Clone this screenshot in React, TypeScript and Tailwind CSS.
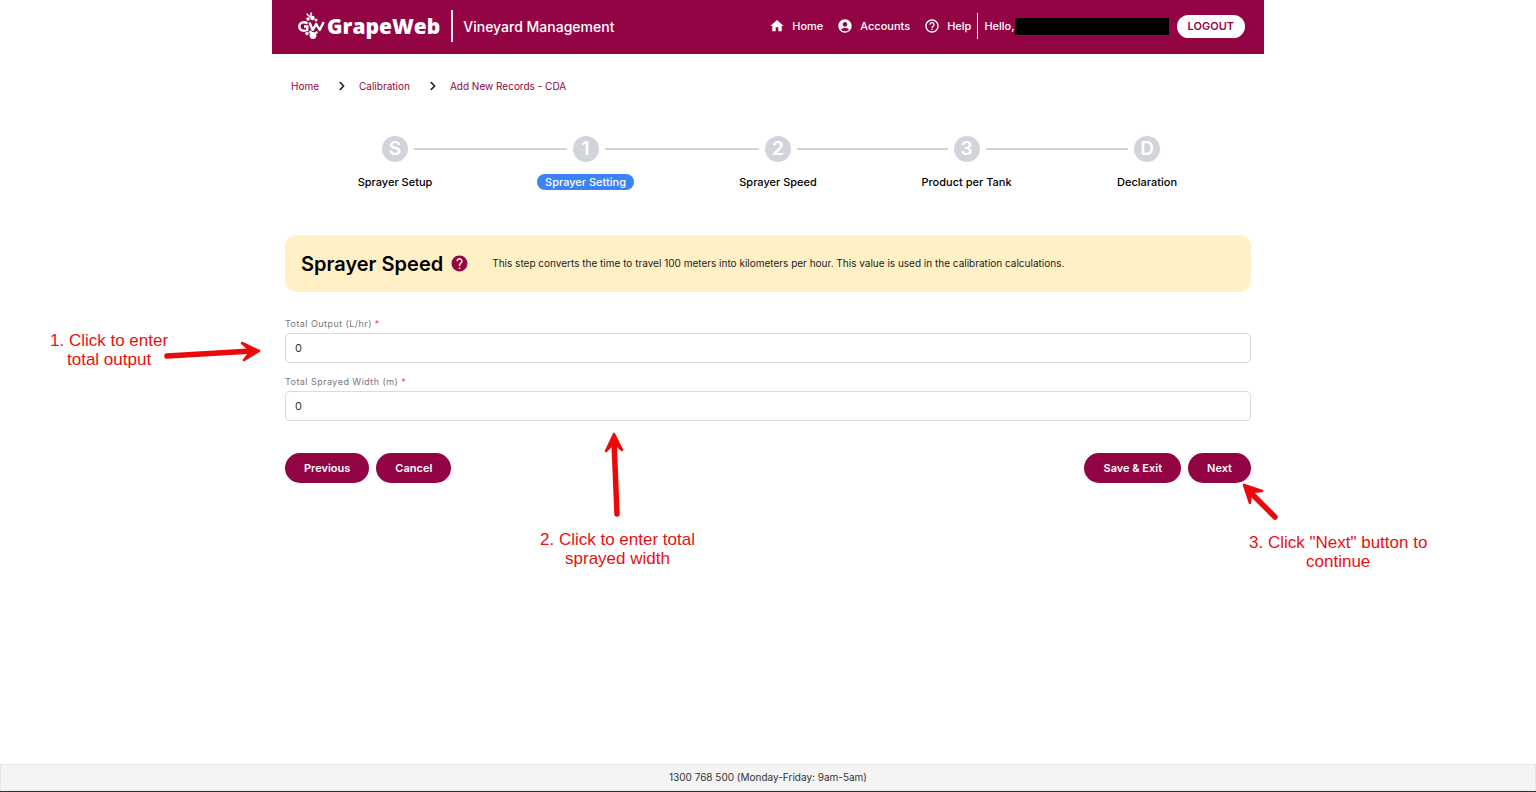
import { useState } from 'react';
import { FaChevronRight } from 'react-icons/fa';
import { MdAccountCircle, MdHelp, MdHelpOutline, MdHome } from 'react-icons/md';

const navItems = [
  { label: 'Home', icon: MdHome },
  { label: 'Accounts', icon: MdAccountCircle },
  { label: 'Help', icon: MdHelpOutline },
];

const steps = [
  { mark: 'S', label: 'Sprayer Setup', line: '' },
  { mark: '1', label: 'Sprayer Setting', line: 'grow-[152]', active: true },
  { mark: '2', label: 'Sprayer Speed', line: 'grow-[154]' },
  { mark: '3', label: 'Product per Tank', line: 'grow-[150]' },
  { mark: 'D', label: 'Declaration', line: 'grow-[142]' },
];

const Logo = () => (
  <a href="#home" className="flex items-center gap-0.5 text-white">
    <svg width="27" height="28" viewBox="0 0 27 28" fill="none" aria-hidden="true">
      {/* leaf and stalk */}
      <path d="M9 2l3 3M13 1v4" stroke="white" strokeWidth="1.500" strokeLinecap="round" />
      <circle cx="10" cy="7" r="1.800" fill="white" />
      <circle cx="14.500" cy="6" r="2.200" fill="white" />
      <circle cx="18" cy="8" r="1.500" fill="white" />
      {/* G and W arms */}
      <path d="M9.500 11.500C6 9 1.300 10.500 1.300 14.500c0 4 4.500 5 8 3.500v-3.500H6" stroke="white" strokeWidth="2.400" />
      <path d="M11.500 10.500l3.200 7.500 3.500-6 3.500 6 4-8" stroke="white" strokeWidth="2.400" strokeLinejoin="round" />
      {/* grapes */}
      <circle cx="9" cy="21.500" r="1.800" fill="white" />
      <circle cx="12.500" cy="20" r="1.500" fill="white" />
      <circle cx="18.500" cy="20.500" r="1.300" fill="white" />
      <circle cx="15" cy="23.500" r="3.400" fill="white" />
    </svg>
    <span className="font-['Open_Sans',sans-serif] text-[21px] leading-7 font-extrabold">GrapeWeb</span>
  </a>
);

const Header = () => (
  <header className="flex h-[54px] items-center justify-between bg-[#920443] pr-[19px] pb-0.5 pl-[26px] text-white">
    <div className="flex items-center">
      <Logo />
      <span className="ml-[11px] h-8 w-0.5 bg-white/90" />
      <span className="ml-2.5 text-[14px] font-medium">Vineyard Management</span>
    </div>
    <div className="flex items-center text-[11px] font-medium">
      <nav className="flex items-center gap-[14px]">
        {navItems.map(({ label, icon: Icon }) => (
          <a key={label} href={`#${label.toLowerCase()}`} className="flex items-center gap-[7px]">
            <Icon size={16} />
            {label}
          </a>
        ))}
      </nav>
      <span className="mx-1.5 h-[26px] w-px bg-white" />
      <span>Hello,</span>
      <span className="h-[17px] w-[154px] bg-black" />
      <button
        type="button"
        className="ml-2 h-[23px] rounded-full bg-white px-[11px] text-[11px] font-semibold text-[#920443]"
      >
        LOGOUT
      </button>
    </div>
  </header>
);

const Breadcrumb = () => (
  <nav aria-label="Breadcrumb" className="flex h-4 items-center gap-3 text-[10px] text-[#920443]">
    <a href="#home" className="mr-1.5">Home</a>
    <FaChevronRight className="text-[#222]" />
    <a href="#calibration" className="mr-1.5">Calibration</a>
    <FaChevronRight className="text-[#222]" />
    <a href="#cda">Add New Records - CDA</a>
  </nav>
);

const Stepper = () => (
  <ol className="flex items-start pr-[104px] pl-[110px]">
    {steps.map((step) => (
      <li key={step.label} className={`flex items-start ${step.line}`}>
        {step.line && <span className="mx-1.5 mt-3 h-0.5 grow bg-[#d1d5db]" />}
        <div className="flex w-[26px] flex-col items-center">
          <span className="flex size-[26px] items-center justify-center rounded-full bg-[#d1d5db] text-[19px] font-semibold text-white">
            {step.mark}
          </span>
          <span
            className={`mt-3 h-4 rounded-full px-2 text-[11px] leading-4 font-medium whitespace-nowrap ${
              step.active ? 'bg-[#3b82f6] text-white' : 'text-black'
            }`}
          >
            {step.label}
          </span>
        </div>
      </li>
    ))}
  </ol>
);

type FieldProps = { id: string; label: string };

const Field = ({ id, label }: FieldProps) => {
  const [value, setValue] = useState('0');

  return (
    <div>
      <label htmlFor={id} className="block text-[9px] leading-[18px] tracking-wider text-[#777]">
        {label} <span className="text-[#ef4444]">*</span>
      </label>
      <input
        id={id}
        inputMode="decimal"
        value={value}
        onChange={(e) => setValue(e.target.value)}
        className="block h-[30px] w-full rounded border border-[#d9dbe2] bg-white px-[9px] text-[11px] text-[#333] outline-none"
      />
    </div>
  );
};

const buttonClass = 'h-[30px] rounded-full bg-[#920443] px-[19px] text-[11px] font-semibold text-white';

// Red callouts that lie over the form
const Notes = () => (
  <div className="font-['Liberation_Sans',Arial,sans-serif] text-[17px] leading-[19px] text-[#e81010]">
    <p className="absolute top-[331px] -left-[222px] text-center whitespace-nowrap">
      1. Click to enter
      <br />
      total output
    </p>
    <svg className="absolute top-[338px] -left-[110px]" width="100" height="28" viewBox="0 0 100 28" fill="none" stroke="#e90b0b" strokeLinecap="round" strokeLinejoin="round" aria-hidden="true">
      <path d="M5 18L90 13" strokeWidth="5.500" />
      <path d="M80 5L97 13L82 22L89 13z" fill="#e90b0b" strokeWidth="2.500" />
    </svg>
    <p className="absolute top-[530px] left-[268px] text-center whitespace-nowrap">
      2. Click to enter total
      <br />
      sprayed width
    </p>
    <svg className="absolute top-[430px] left-[330px]" width="28" height="90" viewBox="0 0 28 90" fill="none" stroke="#e90b0b" strokeLinecap="round" strokeLinejoin="round" aria-hidden="true">
      <path d="M15 84L12 11" strokeWidth="5.500" />
      <path d="M4 21L12 4L20 20L12 13z" fill="#e90b0b" strokeWidth="2.500" />
    </svg>
    <p className="absolute top-[533px] left-[977px] text-center whitespace-nowrap">
      3. Click &quot;Next&quot; button to
      <br />
      continue
    </p>
    <svg className="absolute top-[480px] left-[966px]" width="42" height="42" viewBox="0 0 42 42" fill="none" stroke="#e90b0b" strokeLinecap="round" strokeLinejoin="round" aria-hidden="true">
      <path d="M37 37L11 11" strokeWidth="5.500" />
      <path d="M12 23L6 5L24 11L13 12z" fill="#e90b0b" strokeWidth="2.500" />
    </svg>
  </div>
);

export default function App() {
  return (
    <div className="flex min-h-screen flex-col overflow-x-hidden bg-white font-[Inter,sans-serif]">
      <div className="relative mx-auto w-full max-w-[992px] grow">
        <Header />
        <div className="px-[19px] pt-6">
          <Breadcrumb />
        </div>
        <div className="pt-[42px]">
          <Stepper />
        </div>
        <main className="px-[13px] pt-[45px] pb-8">
          <section className="flex h-[57px] items-center rounded-xl bg-[#fff0c5] px-4">
            <h1 className="text-[20px] font-semibold text-black">Sprayer Speed</h1>
            <MdHelp size={19} className="ml-[7px] text-[#920443]" />
            <p className="ml-[23px] text-[10px] text-[#222]">
              This step converts the time to travel 100 meters into kilometers per hour. This value is used in the
              calibration calculations.
            </p>
          </section>
          <form onSubmit={(e) => e.preventDefault()}>
            <div className="flex flex-col gap-[10px] pt-[23px]">
              <Field id="total-output" label="Total Output (L/hr)" />
              <Field id="sprayed-width" label="Total Sprayed Width (m)" />
            </div>
            <div className="mt-8 flex justify-between">
              <div className="flex gap-[7px]">
                <button type="button" className={buttonClass}>Previous</button>
                <button type="button" className={buttonClass}>Cancel</button>
              </div>
              <div className="flex gap-[7px]">
                <button type="button" className={buttonClass}>Save &amp; Exit</button>
                <button type="submit" className={buttonClass}>Next</button>
              </div>
            </div>
          </form>
        </main>
        <Notes />
      </div>
      <footer className="border-b border-[#333]">
        <p className="border border-[#e5e7eb] bg-[#f4f4f4] text-center text-[10px] leading-[25px] text-[#333]">
          1300 768 500 (Monday-Friday: 9am-5am)
        </p>
      </footer>
    </div>
  );
}
